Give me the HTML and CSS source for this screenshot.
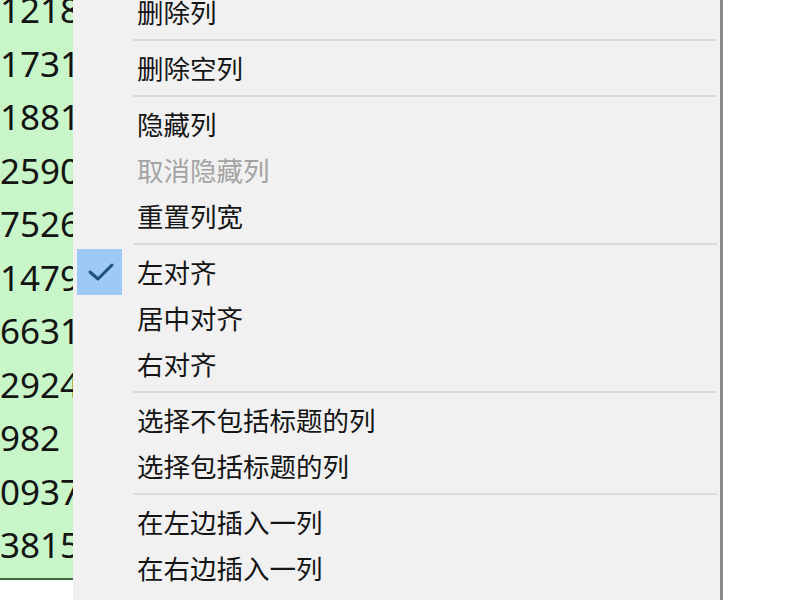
FILE: index.html
```html
<!DOCTYPE html>
<html lang="zh-CN">
<head>
<meta charset="utf-8">
<title>列菜单</title>
<link rel="stylesheet" href="styles.css">
</head>
<body>
<div class="screen">
  <div class="sheet">
    <div class="cells">
      <div class="cell">1218</div>
      <div class="cell">1731</div>
      <div class="cell">1881</div>
      <div class="cell">2590</div>
      <div class="cell">7526</div>
      <div class="cell">1479</div>
      <div class="cell">6631</div>
      <div class="cell">2924</div>
      <div class="cell">982</div>
      <div class="cell">0937</div>
      <div class="cell">3815</div>
    </div>
  </div>
  <div class="menu">
    <div class="items">
      <div class="item"><span class="check"></span><span class="label">删除列</span></div>
      <div class="sep"></div>
      <div class="item"><span class="check"></span><span class="label">删除空列</span></div>
      <div class="sep"></div>
      <div class="item"><span class="check"></span><span class="label">隐藏列</span></div>
      <div class="item disabled"><span class="check"></span><span class="label">取消隐藏列</span></div>
      <div class="item"><span class="check"></span><span class="label">重置列宽</span></div>
      <div class="sep"></div>
      <div class="item"><span class="check on"><svg viewBox="0 0 45 46" width="45" height="46"><path d="M13 23 L21 30 L35 16" fill="none" stroke="#1f4f7f" stroke-width="3" stroke-linecap="round" stroke-linejoin="round"/></svg></span><span class="label">左对齐</span></div>
      <div class="item"><span class="check"></span><span class="label">居中对齐</span></div>
      <div class="item"><span class="check"></span><span class="label">右对齐</span></div>
      <div class="sep"></div>
      <div class="item"><span class="check"></span><span class="label">选择不包括标题的列</span></div>
      <div class="item"><span class="check"></span><span class="label">选择包括标题的列</span></div>
      <div class="sep"></div>
      <div class="item"><span class="check"></span><span class="label">在左边插入一列</span></div>
      <div class="item"><span class="check"></span><span class="label">在右边插入一列</span></div>
    </div>
  </div>
  <div class="blank"></div>
</div>
</body>
</html>
```

FILE: styles.css
```css
html, body {
  margin: 0;
  padding: 0;
  background: #ffffff;
}

.screen {
  display: flex;
  width: 800px;
  height: 600px;
  overflow: hidden;
}

.sheet {
  flex: 0 0 73px;
  height: 600px;
  overflow: hidden;
  background: #ffffff;
}

.cells {
  height: 578px;
  background: #c8f6c8;
  border-bottom: 2px solid #3d6b3d;
  overflow: hidden;
}

.cell {
  height: 53.5px;
  line-height: 53.5px;
  font-family: "Noto Sans", "Open Sans", sans-serif;
  font-size: 35px;
  color: #141414;
  white-space: nowrap;
  position: relative;
  top: -17px;
}

.menu {
  flex: 0 0 647px;
  height: 600px;
  background: #f1f1f1;
  border-right: 3px solid #8a8a8a;
  box-shadow: 2px 0 2px #c8c8c8;
  overflow: hidden;
}

.items {
  margin-top: -11px;
}

.item {
  display: flex;
  align-items: center;
  height: 46px;
  font-family: "Noto Sans CJK SC", "Noto Sans", sans-serif;
  font-size: 26.5px;
  color: #151515;
}

.item.disabled {
  color: #a3a3a3;
}

.check {
  flex: 0 0 45px;
  height: 46px;
  margin-left: 4px;
  margin-right: 15px;
  display: flex;
}

.check.on {
  background: #9ccaf4;
}

.label {
  white-space: nowrap;
  line-height: 46px;
}

.sep {
  height: 10px;
  display: flex;
  align-items: center;
  padding-left: 60px;
  padding-right: 3px;
}

.sep::before {
  content: "";
  flex: 1;
  height: 2px;
  background: #dadada;
}

.blank {
  flex: 1;
  background: #ffffff;
}
```
